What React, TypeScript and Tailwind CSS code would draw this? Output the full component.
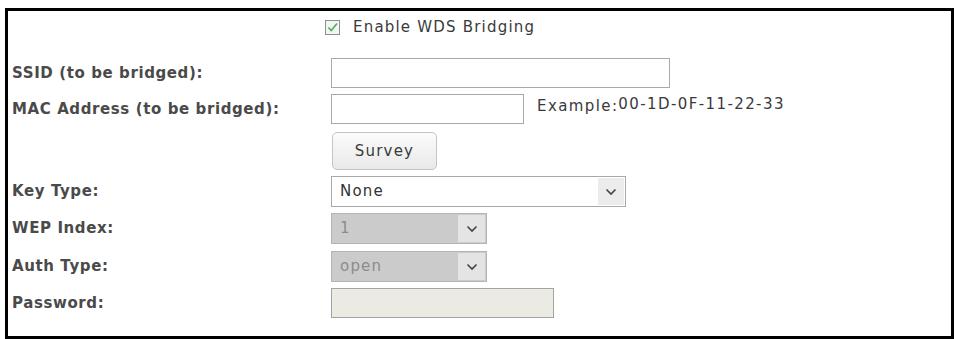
import React from "react";

const font = { fontFamily: '"DejaVu Sans", Verdana, sans-serif' };

function Chevron() {
  return (
    <svg width="12" height="8" viewBox="0 0 12 8">
      <path d="M1.5 1.5 L6 6 L10.5 1.5" fill="none" stroke="#444" strokeWidth="1.6" />
    </svg>
  );
}

function Row({ label, children, h }: { label?: string; children: React.ReactNode; h: string }) {
  return (
    <div className={`flex items-center ${h}`}>
      <div className="w-[323px] pl-[4px] text-[15px] tracking-[0.6px] font-bold text-[#4a4a4a]">{label}</div>
      <div className="flex items-center">{children}</div>
    </div>
  );
}

export default function App() {
  return (
    <div className="w-[954px] h-[339px] bg-white pt-[8px] pl-[5px]" style={font}>
      <div className="w-[949px] h-[331px] border-[3px] border-black flex flex-col">
        <div className="flex items-center h-[32px] pl-[317px]">
          <div className="w-[15px] h-[15px] border border-[#8f8f8f] bg-[#f4f4f4] flex items-center justify-center">
            <svg width="13" height="13" viewBox="0 0 13 13">
              <path d="M2.5 6.5 L5.2 9.5 L11 2.5" fill="none" stroke="#4caf50" strokeWidth="1.6" />
            </svg>
          </div>
          <span className="ml-[13px] text-[15px] tracking-[1.2px] text-[#3a3a3a]">Enable WDS Bridging</span>
        </div>
        <div className="flex flex-col gap-[6px] mt-[15px]">
          <Row label="SSID (to be bridged):" h="h-[30px]">
            <div className="w-[339px] h-[30px] border border-[#a9a9a9] bg-white" />
          </Row>
          <Row label="MAC Address (to be bridged):" h="h-[30px]">
            <div className="w-[193px] h-[30px] border border-[#a9a9a9] bg-white" />
            <span className="ml-[13px] -mt-[6px] text-[15px] tracking-[1.4px] text-[#3a3a3a]">Example:<span className="relative -top-[2px]">00-1D-0F-11-22-33</span></span>
          </Row>
          <Row h="h-[38px] mt-[2px]">
            <button className="ml-[1px] w-[105px] h-[38px] rounded-[5px] border border-[#c4c4c4] bg-gradient-to-b from-[#fbfbfb] to-[#e9e9e9] text-[15px] tracking-[1.2px] text-[#3a3a3a]">Survey</button>
          </Row>
          <Row label="Key Type:" h="h-[31px]">
            <div className="w-[295px] h-[31px] border border-[#a9a9a9] bg-white flex items-center justify-between">
              <span className="pl-[8px] text-[15px] tracking-[1.2px] text-[#333]">None</span>
              <div className="w-[26px] h-[27px] mr-[1px] bg-[#ececec] flex items-center justify-center"><Chevron /></div>
            </div>
          </Row>
          <Row label="WEP Index:" h="h-[31px]">
            <div className="w-[156px] h-[31px] border border-[#b4b4b4] bg-[#cbcbcb] flex items-center justify-between">
              <span className="pl-[8px] text-[15px] text-[#8c8c8c]">1</span>
              <div className="w-[27px] h-[27px] mr-[1px] bg-[#e4e4e4] flex items-center justify-center"><Chevron /></div>
            </div>
          </Row>
          <Row label="Auth Type:" h="h-[31px] mt-[1px]">
            <div className="w-[156px] h-[31px] border border-[#b4b4b4] bg-[#cbcbcb] flex items-center justify-between">
              <span className="pl-[8px] text-[15px] tracking-[1.2px] text-[#8c8c8c]">open</span>
              <div className="w-[27px] h-[27px] mr-[1px] bg-[#e4e4e4] flex items-center justify-center"><Chevron /></div>
            </div>
          </Row>
          <Row label="Password:" h="h-[30px]">
            <div className="w-[223px] h-[30px] border border-[#a3a3a3] bg-[#ebebe4]" />
          </Row>
        </div>
      </div>
    </div>
  );
}
